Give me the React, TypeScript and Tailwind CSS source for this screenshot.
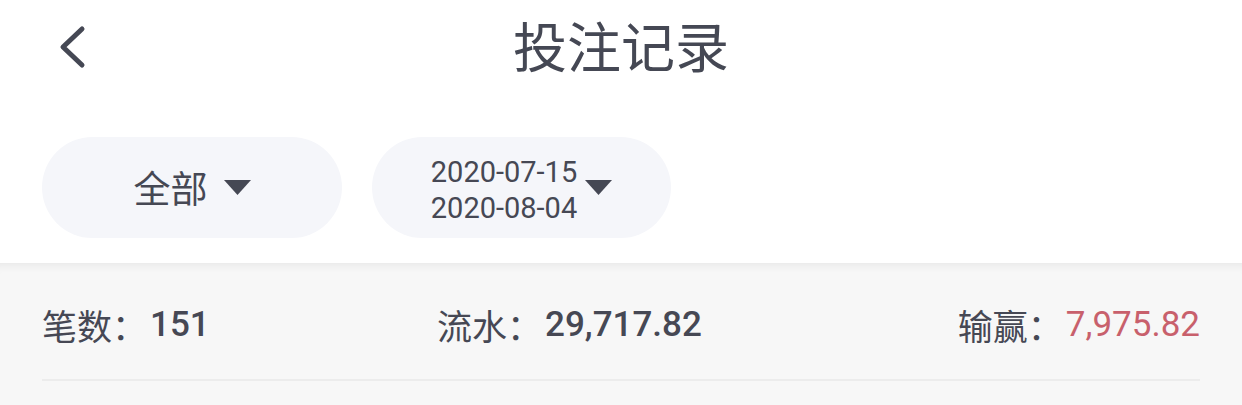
import React from "react";

const cjk = { fontFamily: '"Noto Sans CJK SC", "Noto Sans", sans-serif' };
const num = { fontFamily: 'Roboto, "Noto Sans CJK SC", sans-serif' };

function Caret() {
  return (
    <svg width="27" height="15" viewBox="0 0 27 15" className="shrink-0">
      <path d="M0 0 H27 L13.5 15 Z" fill="#454854" />
    </svg>
  );
}

function Stat({ label, value, valueClass }: { label: string; value: string; valueClass: string }) {
  return (
    <div className="flex items-center whitespace-nowrap">
      <span className="text-[35px] text-[#464854]" style={cjk}>{label}：</span>
      <span className={`text-[35px] ml-[3px] ${valueClass}`} style={num}>{value}</span>
    </div>
  );
}

export default function App() {
  return (
    <div className="w-[1242px] h-[405px] overflow-hidden bg-white">
      {/* Nav */}
      <div className="flex items-center h-[94px]">
        <div className="w-[120px] pl-[58px] flex items-center">
          <svg width="30" height="44" viewBox="0 0 30 44" fill="none">
            <path d="M24 4 L5 22 L24 40" stroke="#454854" strokeWidth="5" strokeLinecap="round" strokeLinejoin="round" />
          </svg>
        </div>
        <div className="flex-1 text-center text-[54px] leading-none text-[#454854] -mt-[4px]" style={cjk}>
          投注记录
        </div>
        <div className="w-[120px]" />
      </div>

      {/* Filters */}
      <div className="flex gap-[30px] px-[42px] pt-[43px] pb-[25px]">
        <div className="w-[300px] h-[101px] rounded-full bg-[#f5f6fa] flex items-center justify-center gap-[16px]">
          <span className="text-[37px] leading-none text-[#464854]" style={cjk}>全部</span>
          <Caret />
        </div>
        <div className="w-[299px] h-[101px] rounded-full bg-[#f5f6fa] flex items-center justify-center gap-[8px]">
          <div className="flex flex-col text-[29px] leading-[36px] text-[#464854] pt-[4px]" style={num}>
            <span>2020-07-15</span>
            <span>2020-08-04</span>
          </div>
          <Caret />
        </div>
      </div>

      {/* Summary */}
      <div className="bg-[#f7f7f7] shadow-[inset_0_10px_10px_-8px_rgba(0,0,0,0.07)] h-[142px]">
        <div className="flex items-center h-[116px] pt-[8px] px-[42px]">
          <div className="w-[395px]">
            <Stat label="笔数" value="151" valueClass="font-medium text-[#464854]" />
          </div>
          <Stat label="流水" value="29,717.82" valueClass="font-medium text-[#464854]" />
          <div className="ml-auto">
            <Stat label="输赢" value="7,975.82" valueClass="text-[#c8606c]" />
          </div>
        </div>
        <div className="mx-[42px] h-[2px] bg-[#ececec]" />
      </div>
    </div>
  );
}
